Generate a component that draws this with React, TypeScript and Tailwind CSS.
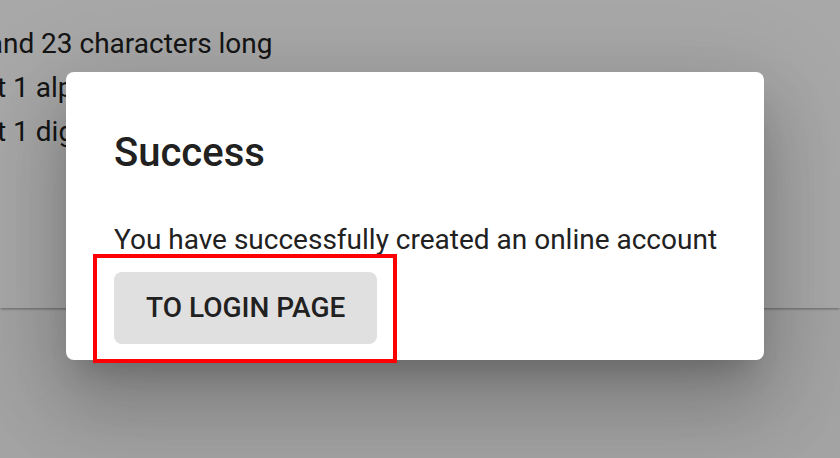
import React from "react";

export default function App() {
  return (
    <div
      className="relative w-[840px] h-[458px] overflow-hidden bg-[#f7f7f7]"
      style={{ fontFamily: "Roboto, 'Liberation Sans', sans-serif" }}
    >
      {/* background page card */}
      <div className="h-[308px] bg-white shadow-[0_2px_2px_-1px_rgba(0,0,0,0.25),0_1px_3px_0_rgba(0,0,0,0.14)]">
        <div className="flex flex-col pt-[22px] text-[28px] leading-[44px] text-[#212121] whitespace-nowrap">
          <div className="ml-[-35px]">8 and 23 characters long</div>
          <div className="ml-[-3px]">t 1 alphabet</div>
          <div className="ml-[-3px]">t 1 digit</div>
        </div>
      </div>

      {/* overlay */}
      <div className="absolute inset-0 bg-black/[0.34] pl-[66px] pt-[72px]">
        <div className="w-[698px] h-[288px] bg-white rounded-[8px] px-[48px] pt-[57px] shadow-[0_22px_30px_-14px_rgba(0,0,0,0.2),0_48px_76px_6px_rgba(0,0,0,0.14),0_18px_92px_16px_rgba(0,0,0,0.12)]">
          <div className="text-[40px] leading-[48px] font-medium text-[#212121]">
            Success
          </div>
          <div className="mt-[39px] text-[28px] leading-[48px] text-[#212121] whitespace-nowrap">
            You have successfully created an online account
          </div>
          <button className="mt-[8px] h-[72px] px-[32px] rounded-[8px] bg-[#e0e0e0] text-[28px] leading-[28px] font-medium text-[#212121] flex items-center">
            TO LOGIN PAGE
          </button>
        </div>
      </div>

      {/* red highlight annotation */}
      <div className="absolute left-[93px] top-[254px] w-[304px] h-[109px] border-[4px] border-[#ff0000]" />
    </div>
  );
}
